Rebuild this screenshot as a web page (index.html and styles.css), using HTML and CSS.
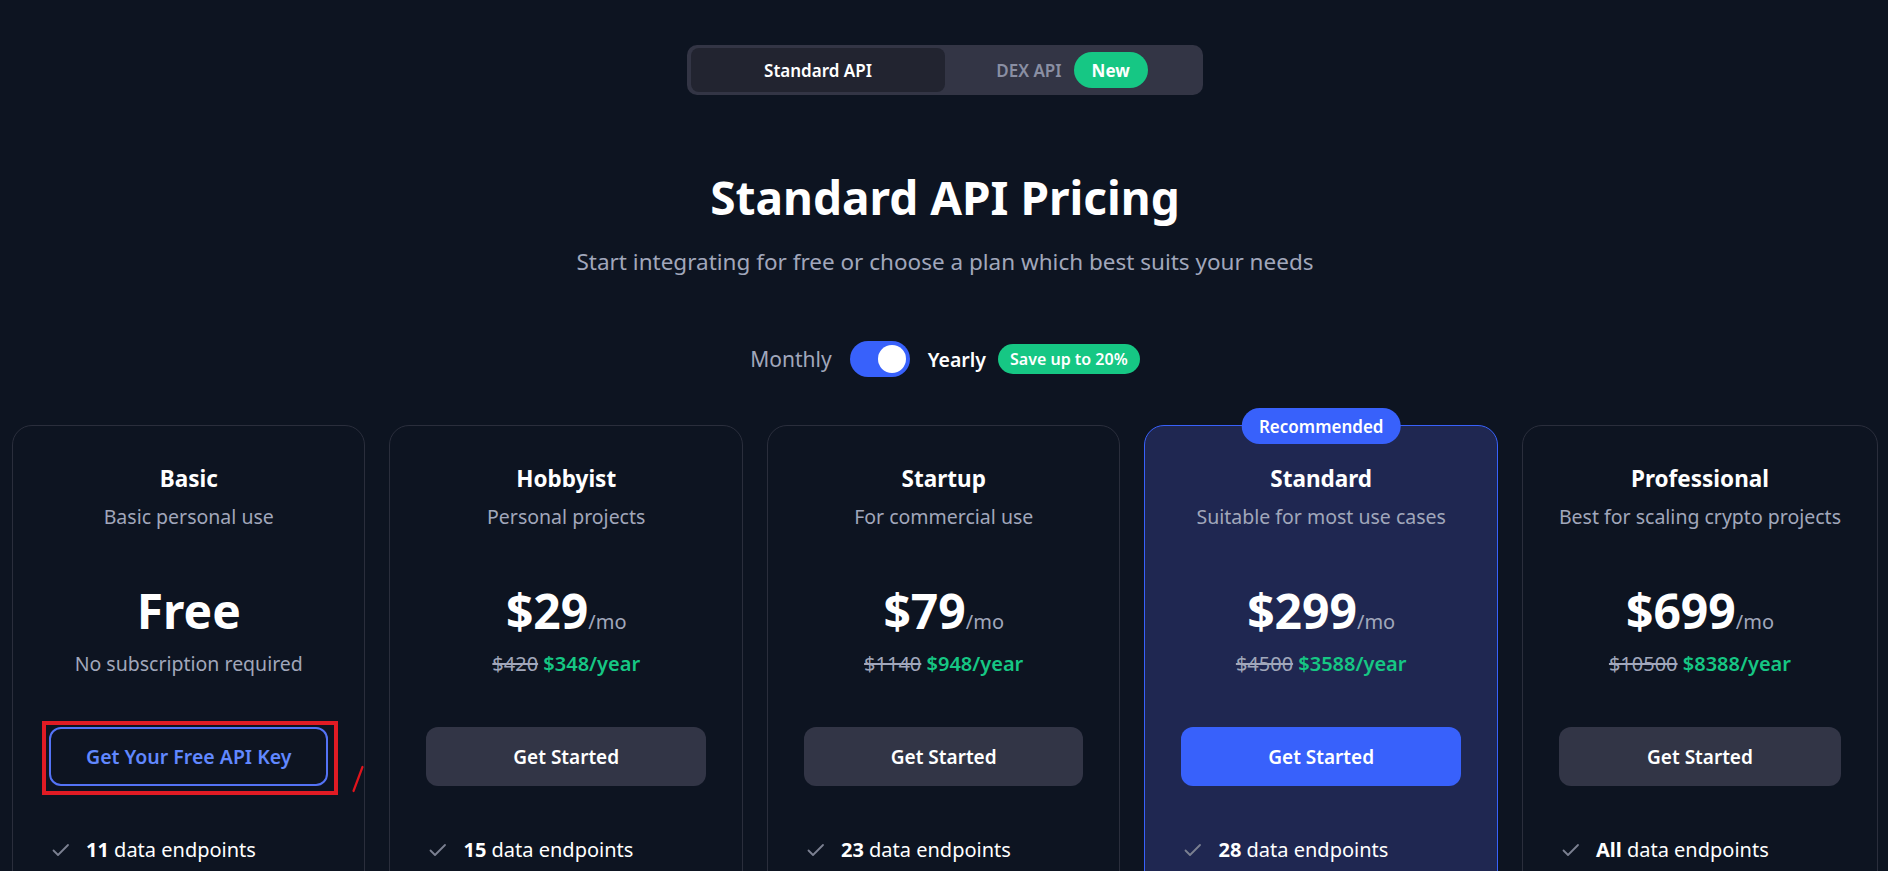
FILE: index.html
```html
<!DOCTYPE html>
<html lang="en">
<head>
<meta charset="utf-8">
<title>Standard API Pricing</title>
<link rel="stylesheet" href="styles.css">
</head>
<body>
<div class="page">
  <div class="tabs">
    <div class="tab tab-active">Standard API</div>
    <div class="tab">DEX API <span class="pill-new">New</span></div>
  </div>

  <h1 class="title">Standard API Pricing</h1>
  <p class="subtitle">Start integrating for free or choose a plan which best suits your needs</p>

  <div class="billing">
    <span class="billing-monthly">Monthly</span>
    <span class="switch"><span class="knob"></span></span>
    <span class="billing-yearly">Yearly</span>
    <span class="save">Save up to 20%</span>
  </div>

  <div class="plans">
    <div class="card">
      <div class="plan-name">Basic</div>
      <div class="plan-desc">Basic personal use</div>
      <div class="price"><span class="amount">Free</span></div>
      <div class="yearly"><span class="note">No subscription required</span></div>
      <div class="btn-wrap">
        <a class="btn btn-outline">Get Your Free API Key</a>
        <span class="mark-box"></span>
        <svg class="mark-slash" width="14" height="30" viewBox="0 0 14 30"><path d="M2.5 27 L11.5 3" stroke="#e0141c" stroke-width="2.2" fill="none" stroke-linecap="round"/></svg>
      </div>
      <ul class="features">
        <li><svg class="check" width="24" height="24" viewBox="0 0 24 24"><path d="M4.5 12.5l4.5 4.5 10-10" fill="none" stroke="#7b8091" stroke-width="1.8" stroke-linecap="round" stroke-linejoin="round"/></svg><span><b>11</b> data endpoints</span></li>
      </ul>
    </div>

    <div class="card">
      <div class="plan-name">Hobbyist</div>
      <div class="plan-desc">Personal projects</div>
      <div class="price"><span class="amount">$29</span><span class="per">/mo</span></div>
      <div class="yearly"><s class="old">$420</s> <span class="new">$348/year</span></div>
      <div class="btn-wrap"><a class="btn btn-gray">Get Started</a></div>
      <ul class="features">
        <li><svg class="check" width="24" height="24" viewBox="0 0 24 24"><path d="M4.5 12.5l4.5 4.5 10-10" fill="none" stroke="#7b8091" stroke-width="1.8" stroke-linecap="round" stroke-linejoin="round"/></svg><span><b>15</b> data endpoints</span></li>
      </ul>
    </div>

    <div class="card">
      <div class="plan-name">Startup</div>
      <div class="plan-desc">For commercial use</div>
      <div class="price"><span class="amount">$79</span><span class="per">/mo</span></div>
      <div class="yearly"><s class="old">$1140</s> <span class="new">$948/year</span></div>
      <div class="btn-wrap"><a class="btn btn-gray">Get Started</a></div>
      <ul class="features">
        <li><svg class="check" width="24" height="24" viewBox="0 0 24 24"><path d="M4.5 12.5l4.5 4.5 10-10" fill="none" stroke="#7b8091" stroke-width="1.8" stroke-linecap="round" stroke-linejoin="round"/></svg><span><b>23</b> data endpoints</span></li>
      </ul>
    </div>

    <div class="card card-featured">
      <span class="badge">Recommended</span>
      <div class="plan-name">Standard</div>
      <div class="plan-desc">Suitable for most use cases</div>
      <div class="price"><span class="amount">$299</span><span class="per">/mo</span></div>
      <div class="yearly"><s class="old">$4500</s> <span class="new">$3588/year</span></div>
      <div class="btn-wrap"><a class="btn btn-blue">Get Started</a></div>
      <ul class="features">
        <li><svg class="check" width="24" height="24" viewBox="0 0 24 24"><path d="M4.5 12.5l4.5 4.5 10-10" fill="none" stroke="#7b8091" stroke-width="1.8" stroke-linecap="round" stroke-linejoin="round"/></svg><span><b>28</b> data endpoints</span></li>
      </ul>
    </div>

    <div class="card">
      <div class="plan-name">Professional</div>
      <div class="plan-desc">Best for scaling crypto projects</div>
      <div class="price"><span class="amount">$699</span><span class="per">/mo</span></div>
      <div class="yearly"><s class="old">$10500</s> <span class="new">$8388/year</span></div>
      <div class="btn-wrap"><a class="btn btn-gray">Get Started</a></div>
      <ul class="features">
        <li><svg class="check" width="24" height="24" viewBox="0 0 24 24"><path d="M4.5 12.5l4.5 4.5 10-10" fill="none" stroke="#7b8091" stroke-width="1.8" stroke-linecap="round" stroke-linejoin="round"/></svg><span><b>All</b> data endpoints</span></li>
      </ul>
    </div>
  </div>
</div>
</body>
</html>
```

FILE: styles.css
```css
* { box-sizing: border-box; }

html, body {
  margin: 0;
  background: #0d1421;
  color: #ffffff;
  font-family: "Noto Sans", "Open Sans", "DejaVu Sans", sans-serif;
  overflow: hidden;
}

.page {
  padding: 45px 10px 0 12px;
  display: flex;
  flex-direction: column;
  align-items: center;
}

/* top tabs */
.tabs {
  width: 516px;
  height: 50px;
  padding: 3px 4px;
  background: #333545;
  border-radius: 10px;
  display: flex;
}
.tab {
  flex: 1;
  display: flex;
  align-items: center;
  justify-content: center;
  gap: 12px;
  font-size: 17px;
  font-weight: 600;
  color: #8a8fa3;
  border-radius: 8px;
}
.tab-active {
  background: #222430;
  color: #ffffff;
}
.pill-new {
  height: 36px;
  padding: 0 18px;
  border-radius: 18px;
  background: #16c784;
  color: #ffffff;
  font-weight: 700;
  display: flex;
  align-items: center;
}

.title {
  margin: 73px 0 0;
  font-size: 46px;
  line-height: 58px;
  font-weight: 700;
  color: #ffffff;
}
.subtitle {
  margin: 21px 0 0;
  font-size: 22.5px;
  line-height: 30px;
  color: #a1a7bb;
}

/* billing toggle */
.billing {
  margin-top: 64px;
  height: 36px;
  display: flex;
  align-items: center;
  font-size: 21px;
}
.billing-monthly { color: #a1a7bb; margin-right: 18px; }
.billing-yearly { color: #ffffff; font-weight: 600; font-size: 19.5px; margin: 0 12px 0 18px; }
.switch {
  width: 60px;
  height: 36px;
  border-radius: 18px;
  background: #3861fb;
  display: flex;
  align-items: center;
  justify-content: flex-end;
  padding: 0 4px;
}
.knob {
  width: 28px;
  height: 28px;
  border-radius: 50%;
  background: #ffffff;
}
.save {
  height: 30px;
  padding: 0 12px;
  border-radius: 15px;
  background: #16c784;
  color: #ffffff;
  font-size: 16px;
  font-weight: 600;
  display: flex;
  align-items: center;
}

/* plans */
.plans {
  margin-top: 48px;
  width: 100%;
  display: grid;
  grid-template-columns: repeat(5, 1fr);
  gap: 24px;
}
.card {
  position: relative;
  border: 1px solid #2a2e3c;
  border-radius: 20px;
  padding: 36px 36px 40px;
  height: 480px;
  display: flex;
  flex-direction: column;
  align-items: center;
  text-align: center;
}
.card-featured {
  background: #1f2751;
  border-color: #3861fb;
}
.badge {
  position: absolute;
  top: -18px;
  left: 50%;
  transform: translateX(-50%);
  height: 36px;
  padding: 0 17px;
  border-radius: 18px;
  background: #3861fb;
  color: #ffffff;
  font-size: 17px;
  font-weight: 600;
  display: flex;
  align-items: center;
  white-space: nowrap;
}
.plan-name {
  margin-top: 1px;
  font-size: 22.5px;
  line-height: 32px;
  font-weight: 700;
}
.plan-desc {
  margin-top: 8px;
  font-size: 19.5px;
  line-height: 28px;
  color: #a1a7bb;
  white-space: nowrap;
}
.price {
  margin-top: 52px;
  font-size: 48px;
  line-height: 56px;
  font-weight: 700;
  height: 56px;
}
.amount {
  color: #ffffff;
}
.per {
  font-size: 20px;
  line-height: 1;
  font-weight: 400;
  color: #a1a7bb;
}
.yearly {
  margin-top: 11px;
  font-size: 20px;
  line-height: 28px;
  height: 28px;
  white-space: nowrap;
}
.note { color: #a1a7bb; font-size: 19.5px; }
.old { color: #a1a7bb; }
.new { color: #16c784; font-weight: 600; }

.btn-wrap {
  position: relative;
  width: 100%;
  margin-top: 49px;
}
.btn {
  width: 100%;
  height: 59px;
  border-radius: 12px;
  display: flex;
  align-items: center;
  justify-content: center;
  font-size: 19px;
  font-weight: 600;
  color: #ffffff;
  text-decoration: none;
}
.btn-gray { background: #323546; }
.btn-blue { background: #3861fb; }
.btn-outline {
  border: 2px solid #5473f6;
  color: #6188ff;
  background: transparent;
  font-size: 19.5px;
}

/* annotation marks drawn over the screenshot */
.mark-box {
  position: absolute;
  left: -7px;
  top: -6px;
  width: 296px;
  height: 74px;
  border: 4px solid #e01b24;
  pointer-events: none;
}
.mark-slash {
  position: absolute;
  left: 302px;
  top: 37px;
}

.features {
  list-style: none;
  margin: 50px 0 0;
  padding: 0;
  width: 100%;
}
.features li {
  display: flex;
  align-items: center;
  gap: 13px;
  font-size: 20px;
  line-height: 28px;
  text-align: left;
}
.features b { font-weight: 700; }
.check { flex: none; }
```
